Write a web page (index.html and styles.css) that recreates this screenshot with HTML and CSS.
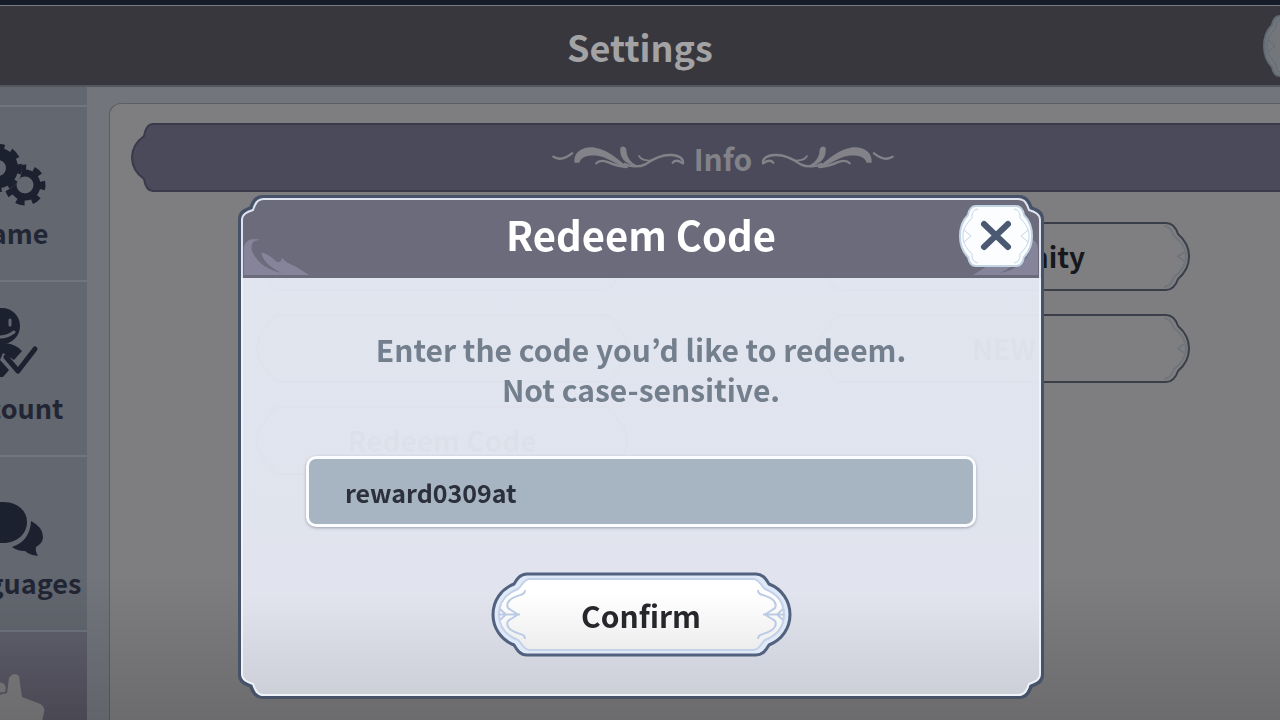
FILE: index.html
```html
<!DOCTYPE html>
<html lang="en">
<head>
<meta charset="utf-8">
<meta name="viewport" content="width=device-width, initial-scale=1">
<title>Settings</title>
<link rel="stylesheet" href="styles.css">
</head>
<body>
<svg class="defs" aria-hidden="true">
  <symbol id="close-plate" viewBox="0 0 74 64">
    <path class="plate-face" d="M17 2H57C62 2 64 6 65 11C70 16 73 24 73 32S70 48 65 53C64 58 62 62 57 62H17C12 62 10 58 9 53C4 48 1 40 1 32S4 16 9 11C10 6 12 2 17 2Z"/>
    <path class="plate-line" d="M19 5C13 6 13 10 13 14C7 20 4 25 4 32S7 44 13 50C13 55 14 58 19 59M55 5C61 6 61 10 61 14C67 20 70 25 70 32S67 44 61 50C61 55 60 58 55 59M5 26L12 32L5 38M69 26L62 32L69 38"/>
  </symbol>
  <symbol id="flourish" viewBox="40 45 399 75">
    <g fill="none" stroke="currentColor" stroke-width="7" stroke-linecap="round">
      <path d="M44 80Q67 96 100 70"/>
      <path d="M173 100Q185 86 212 98Q230 107 264 111"/>
      <path d="M258 102C272 110 300 113 320 103C345 85 370 74 397 75C422 76 435 86 433 100M402 98Q412 86 431 99"/>
      <path d="M301 78Q310 94 340 91" stroke-width="5"/>
    </g>
    <path d="M107 98C104 64 135 48 170 53C212 61 235 86 270 113C232 105 207 81 176 77C145 76 128 80 122 98Z" fill="currentColor"/>
    <path d="M245 54Q254 44 263 57C263 78 272 98 300 108C266 108 241 87 245 54Z" fill="currentColor"/>
  </symbol>
  <symbol id="corner-curl" viewBox="0 0 70 42">
    <path d="M1 40V12C2 4 9 1 18 4C10 4 8 8 9 14C12 25 24 35 40 38C29 33 20 26 19 17C24 18 29 21 33 25C36 28 40 27 40 22C44 28 51 29 57 33L68 40Z" fill="currentColor"/>
  </symbol>
</svg>

<div class="app">
  <div class="status-strip"></div>
  <header class="topbar">
    <h1 class="topbar-title">Settings</h1>
    <button class="topbar-close" type="button" aria-label="Close settings"><svg><use href="#close-plate"/></svg></button>
  </header>

  <div class="main">
    <nav class="tabs">
      <button class="tab" type="button">
        <svg class="tab-icon" viewBox="-38 129 96 80" aria-hidden="true">
          <g fill="none" stroke="#1c2130">
            <circle cx="25" cy="185" r="12" stroke-width="7"/>
            <circle cx="25" cy="185" r="17" stroke-width="7" stroke-dasharray="8 7.26" transform="rotate(-12 25 185)"/>
          </g>
          <circle cx="-2" cy="168" r="24" fill="#63676f"/>
          <g fill="none" stroke="#1c2130">
            <circle cx="-2" cy="168" r="14" stroke-width="12"/>
            <circle cx="-2" cy="168" r="20" stroke-width="8" stroke-dasharray="9 6.7" transform="rotate(-10 -2 168)"/>
          </g>
        </svg>
        <span class="tab-label">Game</span>
      </button>
      <button class="tab" type="button">
        <svg class="tab-icon" viewBox="-38 304 96 80" aria-hidden="true">
          <circle cx="2" cy="326" r="18" fill="#1c2130"/>
          <path d="M10 320V325M-6 320V325" stroke="#63676f" stroke-width="3" stroke-linecap="round"/>
          <path d="M-8 335Q3 340 14 332" fill="none" stroke="#63676f" stroke-width="3" stroke-linecap="round"/>
          <path d="M-22 376C-22 354 -9 345 6 343Q17 345 22 351L14 360L3 353L0 360L9 370L3 377Z" fill="#1c2130"/>
          <path d="M6 357L18 371L35 349" fill="none" stroke="#1c2130" stroke-width="5" stroke-linecap="round" stroke-linejoin="round"/>
        </svg>
        <span class="tab-label">Account</span>
      </button>
      <button class="tab" type="button">
        <svg class="tab-icon" viewBox="-38 479 96 80" aria-hidden="true">
          <path d="M31 521Q43 527 43 537Q43 543 36 547Q35 551 38 556Q29 555 25 551Q17 551 12 547Q30 541 31 521Z" fill="#1c2130"/>
          <path d="M3 502C18 502 27 511 27 522S18 543 3 543Q-5 543 -11 540Q-18 546 -25 545Q-19 541 -18 535Q-22 529 -22 522C-22 510 -11 502 3 502Z" fill="#1c2130"/>
        </svg>
        <span class="tab-label">Languages</span>
      </button>
      <button class="tab tab-active" type="button" aria-label="Info">
        <svg class="tab-icon" viewBox="-38 655 96 80" aria-hidden="true">
          <path d="M-5 697L7 694L9 679Q14 672 19 677L22 698L38 704Q46 707 44 714L40 730H-20V704Z" fill="#7f7f82"/>
          <path d="M-2 683Q8 684 5 693L-4 694Z" fill="#7f7f82"/>
        </svg>
      </button>
    </nav>

    <section class="panel">
      <h2 class="banner">
        <svg class="banner-flourish" aria-hidden="true"><use href="#flourish"/></svg>
        <span>Info</span>
        <svg class="banner-flourish flip" aria-hidden="true"><use href="#flourish"/></svg>
      </h2>
      <div class="options">
        <div class="option"></div>
        <button class="option" type="button">Community</button>
        <div class="option"></div>
        <button class="option" type="button">NEW</button>
        <button class="option" type="button">Redeem Code</button>
      </div>
    </section>
  </div>
</div>

<div class="overlay">
  <form class="modal" role="dialog" aria-labelledby="modal-title">
    <header class="modal-head">
      <svg class="curl curl-left" aria-hidden="true"><use href="#corner-curl"/></svg>
      <svg class="curl curl-right flip" aria-hidden="true"><use href="#corner-curl"/></svg>
      <h2 class="modal-title" id="modal-title">Redeem Code</h2>
      <button class="modal-close" type="button" aria-label="Close">
        <svg viewBox="0 0 74 64"><use href="#close-plate"/><path d="M25 20L49 43M49 20L25 43" stroke="#4a5871" stroke-width="6" stroke-linecap="round"/></svg>
      </button>
    </header>
    <div class="modal-body">
      <label class="prompt" for="code">Enter the code you’d like to redeem.<br>Not case-sensitive.</label>
      <input class="code" id="code" type="text" value="reward0309at">
      <button class="confirm" type="button">Confirm</button>
    </div>
  </form>
</div>
</body>
</html>
```
FILE: styles.css
```css
* { box-sizing: border-box; }

body {
  margin: 0;
  height: 100vh;
  overflow: hidden;
  background: #72757c;
  font-family: "Noto Sans CJK KR", "Noto Sans", sans-serif;
  font-weight: 700;
}

h1, h2 { margin: 0; font-weight: inherit; }

button, input { font: inherit; }

button {
  padding: 0;
  border: 0;
  background: none;
  cursor: pointer;
}

.defs { position: absolute; width: 0; height: 0; }

.flip { transform: scaleX(-1); }

.plate-face {
  fill: var(--plate-fill);
  stroke: var(--plate-stroke);
  stroke-width: 2px;
}

.plate-line {
  fill: none;
  stroke: var(--plate-stroke);
  stroke-width: 1px;
}

/* Settings screen */

.app {
  display: flex;
  flex-direction: column;
  height: 100%;
  overflow: hidden;
}

.status-strip {
  flex: none;
  height: 5px;
  background: #161c2a;
}

.topbar {
  position: relative;
  flex: none;
  display: flex;
  align-items: center;
  justify-content: center;
  height: 82px;
  border-top: 1px solid #7c7e86;
  border-bottom: 2px solid #56575d;
  background: #38373d;
}

.topbar-title {
  color: #a3a3a5;
  font-size: 36px;
  line-height: 56px;
}

.topbar-close {
  --plate-fill: #73777c;
  --plate-stroke: #626a74;
  position: absolute;
  top: 8px;
  right: -57px;
}

.topbar-close svg {
  display: block;
  width: 74px;
  height: 64px;
}

.main {
  flex: 1;
  display: flex;
  gap: 22px;
  min-height: 0;
}

.tabs {
  flex: none;
  width: 154px;
  margin-left: -67px;
  padding-top: 18px;
  background: #63676f;
}

.tab {
  display: flex;
  flex-direction: column;
  align-items: center;
  gap: 4px;
  width: 100%;
  height: 175px;
  padding-top: 22px;
  border-top: 2px solid #70757f;
  color: #222634;
}

.tab-active { background: linear-gradient(#605f6d, #53525f 60%); }

.tab-icon { width: 96px; height: 80px; }

.tab-label {
  font-size: 27px;
  line-height: 40px;
}

.panel {
  flex: 1;
  margin: 16px -57px 0 0;
  padding: 19px 21px;
  border: 1px solid #5d5d63;
  border-bottom: 0;
  border-radius: 12px 12px 0 0;
  background: #7e7e80;
}

.banner {
  display: flex;
  align-items: center;
  justify-content: center;
  gap: 9px;
  height: 69px;
  border: 1px solid transparent;
  border-image: url("data:image/svg+xml,%3Csvg xmlns='http://www.w3.org/2000/svg' width='1184' height='69' viewBox='0 0 1184 69'%3E%3Cpath d='M22 1H1162C1168 1 1170 7 1171 13C1178 18 1183 26 1183 34.5S1178 51 1171 56C1170 62 1168 68 1162 68H22C16 68 14 62 13 56C6 51 1 43 1 34.5S6 18 13 13C14 7 16 1 22 1Z' fill='%234a4a5b' stroke='%233b394c' stroke-width='2'/%3E%3C/svg%3E") 0 30 fill / 0 30px;
  color: #828288;
  font-size: 30px;
  line-height: 48px;
}

.banner-flourish { width: 133px; height: 25px; }

.options {
  display: grid;
  grid-template-columns: repeat(2, 372px);
  justify-content: center;
  gap: 23px 190px;
  padding-top: 30px;
}

.option {
  height: 69px;
  padding-bottom: 2px;
  border: 1px solid transparent;
  border-image: url("data:image/svg+xml,%3Csvg xmlns='http://www.w3.org/2000/svg' width='372' height='69' viewBox='0 0 372 69'%3E%3Cpath d='M24 1H348C355 1 358 6 360 12C367 18 371 26 371 34.5S367 51 360 57C358 63 355 68 348 68H24C17 68 14 63 12 57C5 51 1 43 1 34.5S5 18 12 12C14 6 17 1 24 1Z' fill='%237f7f81' stroke='%23393e48' stroke-width='2'/%3E%3Cpath d='M26 4C19 5 18 10 16 14C8 20 4 27 4 34.5S8 49 16 55C18 60 19 64 26 65M346 4C353 5 354 10 356 14C364 20 368 27 368 34.5S364 49 356 55C354 60 353 64 346 65M6 30L12 34.5L6 39M366 30L360 34.5L366 39' fill='none' stroke='%236f757d' stroke-width='2'/%3E%3C/svg%3E") 0 40 fill / 0 40px;
  color: #16181c;
  font-size: 28px;
}

/* Redeem dialog */

.overlay {
  position: fixed;
  inset: 0;
  display: flex;
  align-items: flex-start;
  justify-content: center;
  padding: 195px 16px 0 18px;
  background: linear-gradient(transparent 80%, rgba(0, 0, 0, 0.14));
}

.modal {
  width: 100%;
  max-width: 806px;
}

.modal-head {
  position: relative;
  display: flex;
  align-items: center;
  justify-content: center;
  height: 83px;
  padding-bottom: 5px;
  border: 1px solid transparent;
  border-image: url("data:image/svg+xml,%3Csvg xmlns='http://www.w3.org/2000/svg' width='806' height='83' viewBox='0 0 806 83'%3E%3Cpath d='M2 90V24C2 17 8 15 13 13C15 8 17 2 25 2H781C789 2 791 8 793 13C798 15 804 17 804 24V90' fill='%236b6b7b' stroke='%23465267' stroke-width='4'/%3E%3Cpath d='M4 90V25C4 19 9 17 15 15C17 9 19 4 26 4H780C787 4 789 9 791 15C797 17 802 19 802 25V90' fill='none' stroke='%23dfe3f0' stroke-width='2'/%3E%3C/svg%3E") 30 30 0 fill / 30px 30px 0;
}

.modal-title {
  color: #ffffff;
  font-size: 40px;
  line-height: 60px;
}

.curl {
  position: absolute;
  bottom: 0;
  width: 68px;
  height: 41px;
  color: #85849a;
}

.curl-left { left: 4px; }

.curl-right { right: 4px; }

.modal-close {
  --plate-fill: #fbfdff;
  --plate-stroke: #c3d4e4;
  position: absolute;
  top: 8px;
  right: 10px;
}

.modal-close svg {
  display: block;
  width: 74px;
  height: 64px;
}

.modal-body {
  display: flex;
  flex-direction: column;
  align-items: center;
  padding: 50px 67px 41px;
  border: 1px solid transparent;
  border-image: url("data:image/svg+xml,%3Csvg xmlns='http://www.w3.org/2000/svg' width='806' height='421' viewBox='0 0 806 421'%3E%3Cdefs%3E%3ClinearGradient id='g' x1='0' y1='0' x2='0' y2='421' gradientUnits='userSpaceOnUse'%3E%3Cstop offset='0' stop-color='%23e4e8f2'/%3E%3Cstop offset='.75' stop-color='%23e4e7f1'/%3E%3Cstop offset='1' stop-color='%23cfd2da'/%3E%3C/linearGradient%3E%3C/defs%3E%3Cpath d='M2 -9V397C2 404 8 406 13 408C15 413 17 419 25 419H781C789 419 791 413 793 408C798 406 804 404 804 397V-9Z' fill='url(%23g)' fill-opacity='.97' stroke='%23465267' stroke-width='4'/%3E%3Cpath d='M4 -9V396C4 402 9 404 15 406C17 412 19 417 26 417H780C787 417 789 412 791 406C797 404 802 402 802 396V-9' fill='none' stroke='%23eef2f9' stroke-width='2'/%3E%3C/svg%3E") 0 30 30 fill / 0 30px 30px;
}

.prompt {
  color: #747f8e;
  font-size: 30px;
  line-height: 40px;
  text-align: center;
}

.code {
  width: 100%;
  height: 71px;
  margin-top: 47px;
  padding: 0 36px;
  border: 3px solid #fafcff;
  border-radius: 10px;
  outline: 0;
  background: #a7b5c3;
  box-shadow: 0 1px 3px rgba(90, 95, 110, 0.5);
  color: #2b303b;
  font-size: 25px;
}

.confirm {
  width: 301px;
  height: 85px;
  margin-top: 45px;
  border: 1px solid transparent;
  border-image: url("data:image/svg+xml,%3Csvg xmlns='http://www.w3.org/2000/svg' width='301' height='85' viewBox='0 0 301 85'%3E%3Cdefs%3E%3ClinearGradient id='g' x1='0' y1='0' x2='0' y2='1'%3E%3Cstop offset='.2' stop-color='%23ffffff'/%3E%3Cstop offset='1' stop-color='%23ededee'/%3E%3C/linearGradient%3E%3C/defs%3E%3Cpath d='M36 2H265C272 2 275 7 278 12C291 17 299 29 299 42.5S291 68 278 73C275 78 272 83 265 83H36C29 83 26 78 23 73C10 68 2 56 2 42.5S10 17 23 12C26 7 29 2 36 2Z' fill='%23dfe9f8' stroke='%2352627e' stroke-width='3'/%3E%3Cpath d='M38 7H263C269 8 270 14 274 17C287 22 293 31 293 42.5S287 63 274 68C270 71 269 77 263 78H38C32 77 31 71 27 68C14 63 8 54 8 42.5S14 22 27 17C31 14 32 8 38 7Z' fill='url(%23g)' stroke='%23c3d1e9' stroke-width='2'/%3E%3Cg fill='none' stroke='%23bccbe5' stroke-width='2'%3E%3Cpath d='M34 18C34 24 27 22 20 27C15 31 15 36 20 38M34 67C34 61 27 63 20 58C15 54 15 49 20 47M8 42.5H29M20 38L27 42.5L20 47M9 37L15 42.5L9 48'/%3E%3Cpath d='M267 18C267 24 274 22 281 27C286 31 286 36 281 38M267 67C267 61 274 63 281 58C286 54 286 49 281 47M293 42.5H272M281 38L274 42.5L281 47M292 37L286 42.5L292 48'/%3E%3C/g%3E%3C/svg%3E") 0 50 fill / 0 50px;
  color: #26272b;
  font-size: 30px;
}
```
